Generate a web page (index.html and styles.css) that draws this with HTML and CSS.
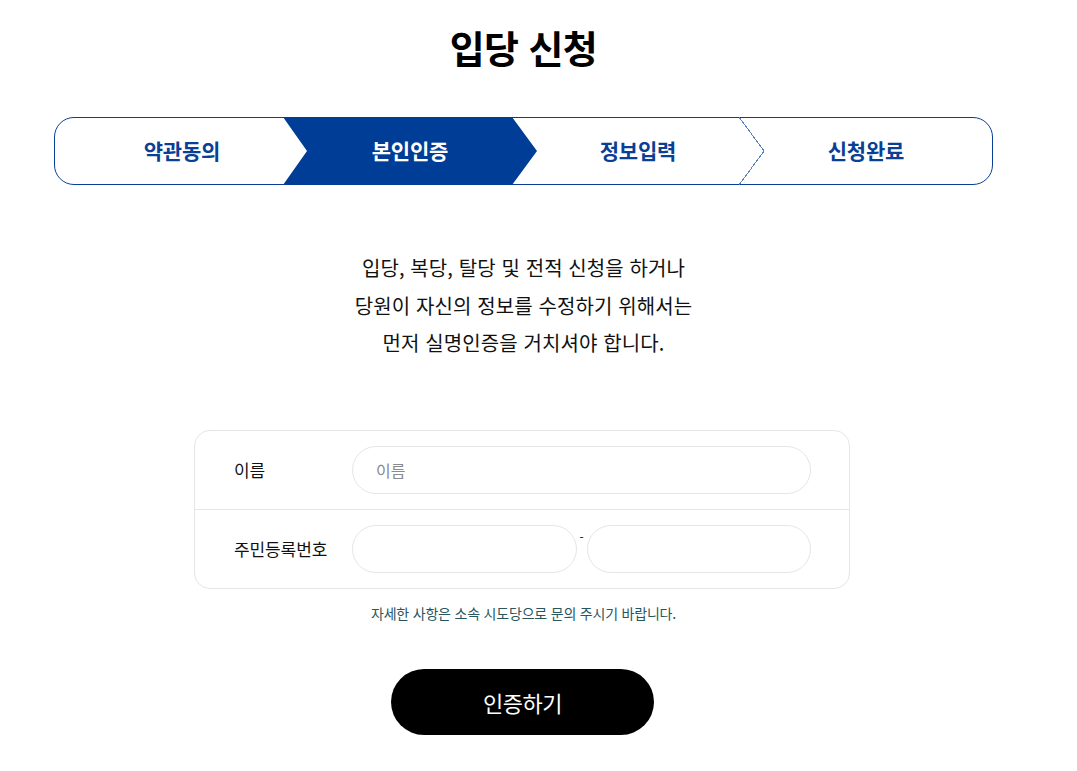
FILE: index.html
```html
<!DOCTYPE html>
<html lang="ko">
<head>
<meta charset="utf-8">
<title>입당 신청</title>
<link rel="stylesheet" href="styles.css">
</head>
<body>
<div class="page">
  <h1 class="title">입당 신청</h1>
  <ol class="steps">
    <li class="step">약관동의</li>
    <li class="step step-active">본인인증</li>
    <li class="step step-next">정보입력</li>
    <li class="step">신청완료</li>
  </ol>
  <p class="desc">입당, 복당, 탈당 및 전적 신청을 하거나<br>당원이 자신의 정보를 수정하기 위해서는<br>먼저 실명인증을 거치셔야 합니다.</p>
  <form class="form">
    <div class="row">
      <label class="label" for="name">이름</label>
      <div class="fields">
        <input class="input" id="name" type="text" placeholder="이름">
      </div>
    </div>
    <div class="row">
      <label class="label" for="rrn1">주민등록번호</label>
      <div class="fields fields-split">
        <input class="input" id="rrn1" type="text">
        <span class="dash">-</span>
        <input class="input" id="rrn2" type="password">
      </div>
    </div>
  </form>
  <p class="note">자세한 사항은 소속 시도당으로 문의 주시기 바랍니다.</p>
  <div class="actions">
    <button class="btn" type="button">인증하기</button>
  </div>
</div>
</body>
</html>
```
FILE: styles.css
```css
* { box-sizing: border-box; }
body {
  margin: 0;
  background: #fff;
  color: #111;
  font-family: "Noto Sans CJK KR", "Noto Sans", sans-serif;
}
.page {
  width: 939px;
  margin-left: 54px;
  padding-top: 21px;
}
.title {
  margin: 0;
  font-size: 38px;
  line-height: 52px;
  font-weight: 700;
  text-align: center;
  letter-spacing: -0.6px;
  color: #000;
}
.steps {
  list-style: none;
  margin: 44px 0 0;
  padding: 0 14px 0 13px;
  height: 68px;
  border: 1px solid #0a3f96;
  border-radius: 20px;
  display: flex;
  position: relative;
}
.step {
  flex: 0 0 228px;
  display: flex;
  align-items: center;
  justify-content: center;
  padding-bottom: 3px;
  font-size: 21px;
  font-weight: 700;
  letter-spacing: -0.2px;
  color: #0a3f96;
  position: relative;
}
.step-active {
  color: #fff;
  z-index: 1;
}
.step-active::before {
  content: "";
  position: absolute;
  top: -1px;
  bottom: -1px;
  left: -13px;
  right: -13px;
  background: #003d96;
  clip-path: polygon(0 0, 229px 0, 100% 50%, 229px 100%, 0 100%, 24px 50%);
  z-index: -1;
}
.step-next::after {
  content: "";
  position: absolute;
  top: -1px;
  bottom: -1px;
  right: -12px;
  width: 25px;
  background: linear-gradient(to top right, transparent calc(50% - 0.5px), #5b80c0 calc(50% - 0.5px), #5b80c0 calc(50% + 0.5px), transparent calc(50% + 0.5px)) top / 100% 50% no-repeat,
              linear-gradient(to bottom right, transparent calc(50% - 0.5px), #5b80c0 calc(50% - 0.5px), #5b80c0 calc(50% + 0.5px), transparent calc(50% + 0.5px)) bottom / 100% 50% no-repeat;
}
.desc {
  margin: 64px 0 0;
  text-align: center;
  font-size: 20px;
  line-height: 37.5px;
  letter-spacing: 0.1px;
  color: #111;
}
.form {
  width: 656px;
  margin: 68px 0 0 140px;
  border: 1px solid #e6e6e6;
  border-radius: 16px;
}
.row {
  display: flex;
  align-items: center;
  padding: 15px 38px 15px 39px;
}
.row + .row {
  border-top: 1px solid #e6e6e6;
}
.label {
  flex: 0 0 118px;
  font-size: 17px;
  letter-spacing: -0.1px;
  color: #111;
}
.fields {
  flex: 1;
  display: grid;
  grid-template-columns: 1fr;
}
.fields-split {
  grid-template-columns: 1fr 10px 1fr;
  align-items: start;
}
.input {
  width: 100%;
  height: 48px;
  border: 1px solid #e6e6e6;
  border-radius: 24px;
  padding: 0 23px;
  font-family: inherit;
  font-size: 16px;
  color: #111;
  background: #fff;
  outline: none;
}
.input::placeholder {
  color: #8a8a8a;
}
.dash {
  text-align: center;
  font-size: 12px;
  line-height: 12px;
  padding-top: 6px;
  color: #111;
}
.note {
  margin: 14px 0 0;
  text-align: center;
  font-size: 14px;
  line-height: 20px;
  letter-spacing: -0.2px;
  color: #275660;
}
.actions {
  margin-top: 46px;
  display: flex;
  justify-content: center;
}
.btn {
  width: 263px;
  height: 66px;
  margin-right: 2px;
  border: 0;
  border-radius: 33px;
  background: #000;
  color: #fff;
  font-family: inherit;
  font-size: 22px;
  letter-spacing: -0.5px;
  cursor: pointer;
}
```
